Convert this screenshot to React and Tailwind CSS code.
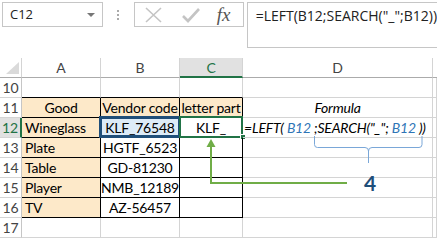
import React from "react";

const GRID = "border-r-[#d4d4d4]";
const GRIDB = "border-b-[#d4d4d4]";

function Cell({ children, r = GRID, b = GRIDB, className = "" }) {
  return (
    <div
      className={`relative flex items-center whitespace-nowrap border-r border-b ${r} ${b} ${className}`}
    >
      {children}
    </div>
  );
}

function RowHead({ n, active }) {
  return (
    <div
      className={
        active
          ? "flex items-center justify-center border-b border-b-[#d4d4d4] border-r-2 border-r-[#217346] bg-[#e1e1e1] text-[14px] tracking-normal text-[#217346]"
          : "flex items-center justify-center border-b border-b-[#d4d4d4] border-r border-r-[#c6c6c6] text-[14px] tracking-normal text-[#444]"
      }
    >
      {n}
    </div>
  );
}

const table = [
  { n: 13, good: "Plate", code: "HGTF_6523" },
  { n: 14, good: "Table", code: "GD-81230" },
  { n: 15, good: "Player", code: "NMB_12189" },
  { n: 16, good: "TV", code: "AZ-56457" },
];

export default function App() {
  return (
    <div className="relative w-[437px] h-[240px] overflow-hidden bg-white font-['Lato',sans-serif] text-black">
      {/* Formula bar */}
      <div className="flex h-[58px] items-start pt-[2px] pl-[2px]">
        <div className="flex h-[25px] w-[101px] items-center justify-between border border-[#c6c6c6] pl-[7px] pr-[7px] font-['Open_Sans',sans-serif] text-[13px] text-[#222]">
          <span>C12</span>
          <span className="h-0 w-0 border-x-[4px] border-t-[4px] border-x-transparent border-t-[#777]" />
        </div>
        <div className="flex w-[31px] h-[25px] flex-col items-center justify-center gap-[2px]">
          <span className="h-[2px] w-[2px] bg-[#aaa]" />
          <span className="h-[2px] w-[2px] bg-[#aaa]" />
          <span className="h-[2px] w-[2px] bg-[#aaa]" />
        </div>
        <div className="flex h-[25px] w-[110px] items-center border border-[#c6c6c6]">
          <svg width="20" height="16" viewBox="0 0 20 16" className="ml-[9px]">
            <path d="M2 1 L17 15 M17 1 L2 15" stroke="#c4c4c4" strokeWidth="1.6" fill="none" />
          </svg>
          <svg width="20" height="16" viewBox="0 0 20 16" className="ml-[17px]">
            <path d="M2 9 L7 14 L18 2" stroke="#c4c4c4" strokeWidth="2.6" fill="none" />
          </svg>
          <span className="ml-[16px] font-['Liberation_Serif',serif] text-[19px] italic leading-none text-[#555]">
            fx
          </span>
        </div>
        <div className="ml-[3px] flex h-[46px] flex-1 items-start border border-r-0 border-[#c6c6c6] pl-[8px] pt-[2px] font-['Open_Sans',sans-serif] text-[14px] text-[#222]">
          =LEFT(B12;SEARCH("_";B12))
        </div>
      </div>

      {/* Sheet */}
      <div className="grid grid-cols-[22px_79px_79px_63px_190px_1fr] auto-rows-[20px] text-[14px] tracking-[-0.2px]">
        {/* column headers */}
        <div className="relative border-r border-b border-r-[#d4d4d4] border-b-[#ababab]">
          <span className="absolute right-[2px] bottom-[3px] h-0 w-0 border-l-[13px] border-t-[12px] border-l-transparent border-t-transparent border-b-0 border-r-0 [border-bottom:12px_solid_#dadada]" />
        </div>
        {["A", "B"].map((c) => (
          <div
            key={c}
            className="flex items-center justify-center border-r border-b border-r-[#d4d4d4] border-b-[#ababab] text-[14px] text-[#444]"
          >
            {c}
          </div>
        ))}
        <div className="flex items-center justify-center border-r border-r-[#d4d4d4] border-b-2 border-b-[#217346] bg-[#e1e1e1] text-[14px] text-[#217346]">
          C
        </div>
        <div className="flex items-center justify-center border-r border-b border-r-[#d4d4d4] border-b-[#ababab] text-[14px] text-[#444]">
          D
        </div>
        <div className="border-b border-b-[#ababab]" />

        {/* row 10 */}
        <RowHead n={10} />
        <Cell b="border-b-black" />
        <Cell b="border-b-black" />
        <Cell b="border-b-black" />
        <Cell />
        <Cell />

        {/* row 11 */}
        <RowHead n={11} />
        <Cell r="border-r-black" b="border-b-black" className="justify-center bg-[#fde9c9]">
          Good
        </Cell>
        <Cell r="border-r-black" b="border-b-black" className="justify-center bg-[#fde9c9]">
          Vendor code
        </Cell>
        <Cell r="border-r-black" b="border-b-black" className="justify-center bg-[#fde9c9]">
          letter part
        </Cell>
        <Cell className="justify-center italic">Formula</Cell>
        <Cell />

        {/* row 12 */}
        <RowHead n={12} active />
        <Cell r="border-r-black" b="border-b-black" className="pl-[3px] bg-[#fde9c9]">
          Wineglass
        </Cell>
        <Cell r="border-r-black" b="border-b-black" className="justify-center bg-[#ddebf7]">
          KLF_76548
          <div className="absolute left-[-2px] top-[-2px] h-[22px] w-[82px] border-[3px] border-[#1f4e79]" />
        </Cell>
        <Cell r="border-r-black" b="border-b-black" className="justify-center">
          KLF_
          <div className="absolute left-[-1px] top-[-2px] h-[22px] w-[64px] border-2 border-[#217346]" />
          <div className="absolute right-[-4px] bottom-[-3px] h-[6px] w-[6px] border border-white bg-[#217346]" />
        </Cell>
        <Cell className="pl-[1px] italic">
          <span>
            =LEFT( <span className="text-[#2e75b6]">B12</span> ;SEARCH("_"; <span className="text-[#2e75b6]">B12</span> ))
          </span>
        </Cell>
        <Cell />

        {/* rows 13-16 */}
        {table.map((row) => (
          <React.Fragment key={row.n}>
            <RowHead n={row.n} />
            <Cell r="border-r-black" b="border-b-black" className="pl-[3px] bg-[#fde9c9]">
              {row.good}
            </Cell>
            <Cell r="border-r-black" b="border-b-black" className="justify-center">
              {row.code}
            </Cell>
            <Cell r="border-r-black" b="border-b-black" />
            <Cell />
            <Cell />
          </React.Fragment>
        ))}

        {/* row 17 */}
        <RowHead n={17} />
        <Cell />
        <Cell />
        <Cell />
        <Cell />
        <Cell />
      </div>

      {/* annotations */}
      <svg className="pointer-events-none absolute left-0 top-0" width="437" height="240">
        <path d="M211 183 V146 M210 183 H347" stroke="#70ad47" strokeWidth="2" fill="none" />
        <polygon points="206.5,147 215.5,147 211,139" fill="#70ad47" />
        <path
          d="M314.5 136 V144.5 Q314.5 147.5 317.5 147.5 H365 Q368.5 147.5 368.5 151 V163 M368.5 151 Q368.5 147.5 372 147.5 H419 Q422 147.5 422 144.5 V136"
          stroke="#7aa7d8"
          strokeWidth="1"
          fill="none"
        />
      </svg>
      <span className="absolute left-[364px] top-[171px] text-[21px] font-bold leading-[24px] text-[#1f4e79]">
        4
      </span>
    </div>
  );
}
